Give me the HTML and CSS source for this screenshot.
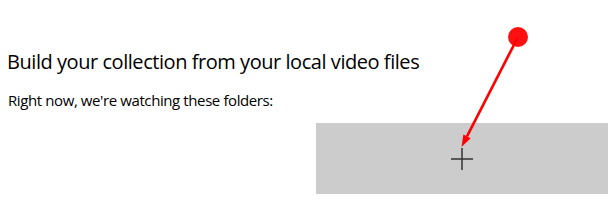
FILE: index.html
```html
<!DOCTYPE html>
<html lang="en">
<head>
<meta charset="utf-8">
<title>Build your collection</title>
<link rel="stylesheet" href="styles.css">
</head>
<body>
<main class="page">
  <h1 class="title">Build your collection from your local video files</h1>
  <p class="subtitle">Right now, we're watching these folders:</p>
  <div class="folders">
    <button class="add" aria-label="Add folder">
      <svg class="plus" width="22" height="22" viewBox="0 0 22 22"><path d="M11 0V22M0 11H22" stroke="#333" stroke-width="1.5" fill="none"/></svg>
    </button>
  </div>
  <svg class="pointer" width="610" height="201" viewBox="0 0 610 201">
    <circle cx="518" cy="37" r="10" fill="#ff1010"/>
    <line x1="518" y1="37" x2="467" y2="136.3" stroke="#ff0000" stroke-width="2.6"/>
    <polygon points="461.5,147 470.6,138.2 463.4,134.5" fill="#ff0000"/>
  </svg>
</main>
</body>
</html>
```
FILE: styles.css
```css
html, body {
  margin: 0;
  padding: 0;
  background: #ffffff;
}
.page {
  position: relative;
  width: 610px;
  height: 201px;
  overflow: hidden;
  font-family: "Open Sans", "Noto Sans", sans-serif;
  color: #000;
  display: flex;
  flex-direction: column;
  padding-top: 48px;
  box-sizing: border-box;
}
.title {
  margin: 0 0 0 7px;
  font-size: 20px;
  font-weight: 400;
  line-height: 28px;
  letter-spacing: -0.45px;
}
.subtitle {
  margin: 14px 0 0 8px;
  font-size: 15px;
  line-height: 20px;
  letter-spacing: -0.4px;
}
.folders {
  margin: 13px 2px 0 316px;
  height: 71px;
  background: #cccccc;
  display: flex;
  align-items: center;
  justify-content: center;
}
.add {
  border: 0;
  padding: 0;
  background: transparent;
  width: 22px;
  height: 22px;
  display: flex;
}
.pointer {
  position: absolute;
  left: 0;
  top: 0;
  pointer-events: none;
}
```
